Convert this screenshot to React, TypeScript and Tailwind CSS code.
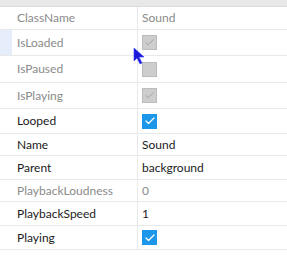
import { Check } from "lucide-react";

type Row = {
  label: string;
  value?: string;
  check?: "on" | "off" | "disabled-on" | "disabled-off";
  readOnly?: boolean;
  h: string;
  selected?: boolean;
};

const rows: Row[] = [
  { label: "ClassName", value: "Sound", readOnly: true, h: "h-[23px]" },
  { label: "IsLoaded", check: "disabled-on", readOnly: true, h: "h-[26px]", selected: true },
  { label: "IsPaused", check: "disabled-off", readOnly: true, h: "h-[27px]" },
  { label: "IsPlaying", check: "disabled-on", readOnly: true, h: "h-[26px]" },
  { label: "Looped", check: "on", h: "h-[25px]" },
  { label: "Name", value: "Sound", h: "h-[22px]" },
  { label: "Parent", value: "background", h: "h-[24px]" },
  { label: "PlaybackLoudness", value: "0", readOnly: true, h: "h-[22px]" },
  { label: "PlaybackSpeed", value: "1", h: "h-[24px]" },
  { label: "Playing", check: "on", h: "h-[24px]" },
];

function Box({ kind }: { kind: NonNullable<Row["check"]> }) {
  if (kind === "on") {
    return (
      <div className="flex h-[15px] w-[15px] items-center justify-center bg-[#1c97ea]">
        <Check size={12} strokeWidth={2.5} className="text-white" />
      </div>
    );
  }
  return (
    <div className="flex h-[15px] w-[15px] items-center justify-center border border-[#bcbcbc] bg-[#cdcdcd]">
      {kind === "disabled-on" && <Check size={11} strokeWidth={2} className="text-[#9e9e9e]" />}
    </div>
  );
}

export default function App() {
  return (
    <div className="relative h-[259px] w-[287px] overflow-hidden bg-white font-['Lato','Noto_Sans',sans-serif] text-[12px]">
      <div className="h-[7px] border-b border-[#dcdcdc] bg-[#e8e8e8]" />
      {rows.map((r) => (
        <div key={r.label} className={`flex ${r.h} border-b border-[#e9e9e9]`}>
          <div className={`w-[12px] ${r.selected ? "bg-[#e6eefb]" : ""}`} />
          <div
            className={`flex w-[126px] items-center border-r border-[#e9e9e9] pl-[5px] ${
              r.readOnly ? "text-[#8a8a8a]" : "text-[#1b1b1b]"
            }`}
          >
            {r.label}
          </div>
          <div
            className={`flex flex-1 items-center pl-[4px] ${
              r.readOnly ? "text-[#8a8a8a]" : "text-[#1b1b1b]"
            }`}
          >
            {r.check ? <Box kind={r.check} /> : r.value}
          </div>
        </div>
      ))}
      <svg
        className="absolute left-[133px] top-[47px]"
        width="12"
        height="18"
        viewBox="0 0 12 18"
      >
        <path d="M1 1 L1 14 L4 11 L7 17 L9 16 L6 10 L11 10 Z" fill="#1a1ad6" stroke="#3a3aff" strokeWidth="0.6" />
      </svg>
    </div>
  );
}
